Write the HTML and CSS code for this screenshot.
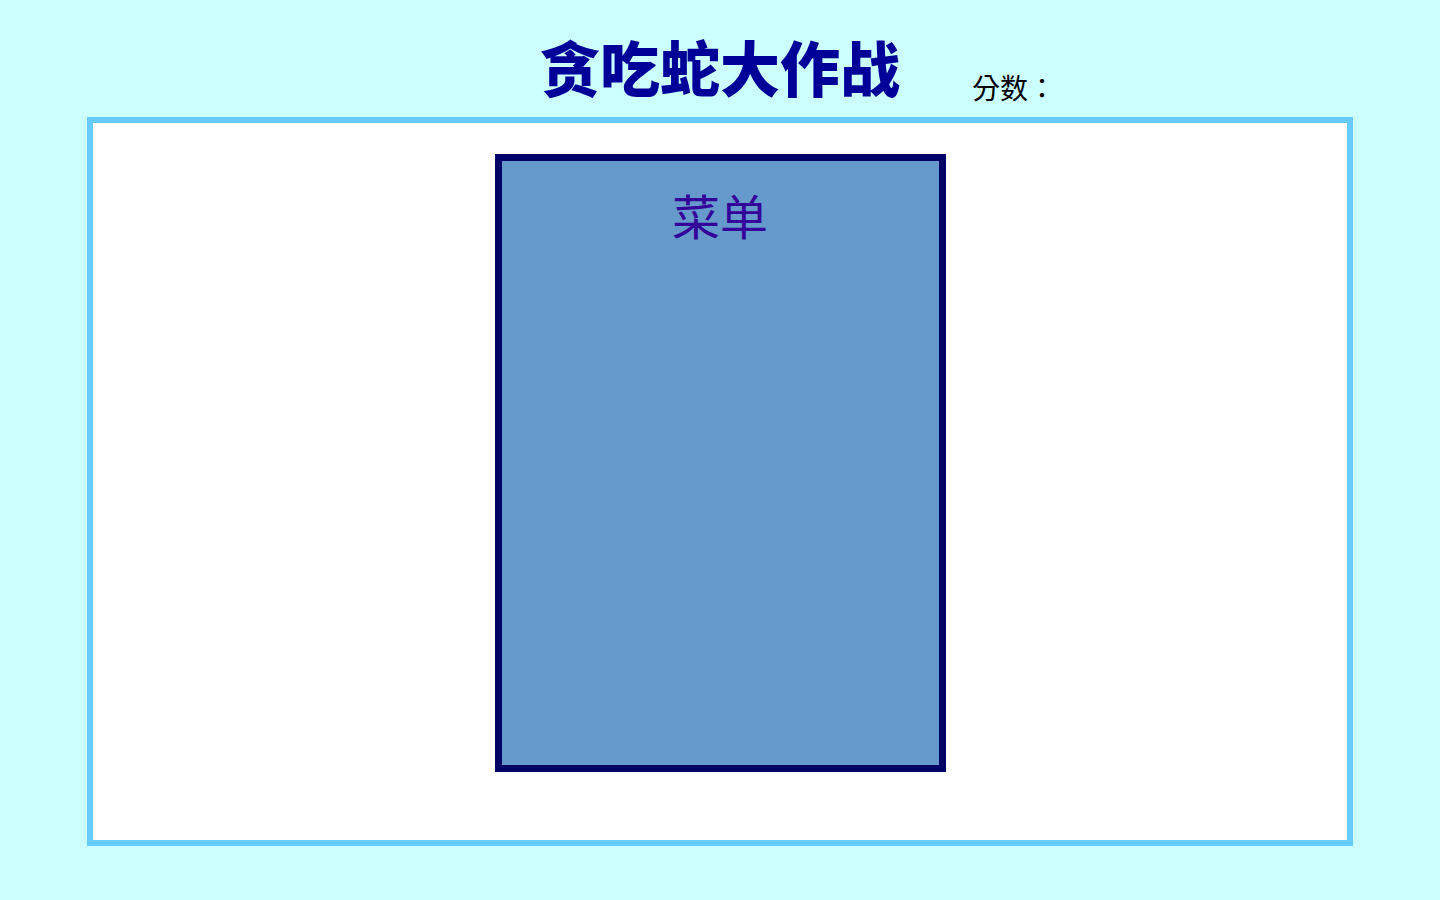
FILE: index.html
```html
<!DOCTYPE html>
<html lang="zh-CN">
<head>
    <meta charset="UTF-8">
    <meta name="viewport" content="width=device-width, initial-scale=1.0">
    <title>贪吃蛇大作战</title>
    <link rel="stylesheet" href="styles.css">
</head>
<body>
    <header class="header">
        <h1 class="title">贪吃蛇大作战</h1>
        <p class="score" lang="zh-TW">分数：<span id="score"></span></p>
    </header>

    <div class="board" id="board">
        <div class="menu" id="menu">
            <h2 class="menu-title">菜单</h2>
        </div>
    </div>
</body>
</html>
```

FILE: styles.css
```css
* {
    margin: 0;
    padding: 0;
    box-sizing: border-box;
}

body {
    font-family: "Noto Sans CJK SC", "Noto Sans", sans-serif;
    background: #ccffff;
    min-height: 100vh;
    color: #000;
}

.header {
    position: relative;
    height: 117px;
    padding-top: 36px;
    text-align: center;
}

.title {
    font-size: 60px;
    line-height: 60px;
    font-weight: 900;
    color: #000099;
}

/* 分数放在标题右边, 冒号居中 */
.score {
    position: absolute;
    left: calc(50% + 252px);
    top: 71px;
    font-family: "Noto Sans CJK TC", "Noto Sans", sans-serif;
    font-size: 28px;
    line-height: 32px;
    color: #000;
    text-spacing-trim: space-all;
}

.board {
    width: 1266px;
    height: 729px;
    margin: 0 auto;
    background: #fff;
    border: 6px solid #66ccff;
    padding-top: 31px;
}

.menu {
    width: 451px;
    height: 618px;
    margin: 0 auto;
    background: #6699cc;
    border: 7px solid #000066;
    text-align: center;
}

.menu-title {
    margin-top: 29px;
    font-size: 48px;
    line-height: 48px;
    font-weight: 400;
    color: #330099;
}
```
